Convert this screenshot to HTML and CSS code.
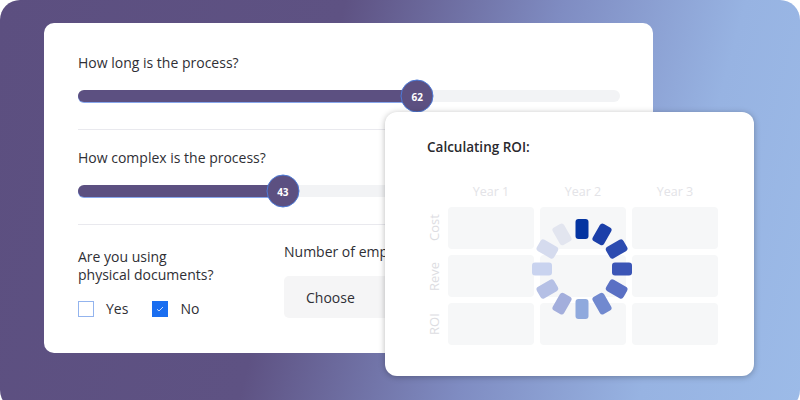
FILE: index.html
```html
<!DOCTYPE html>
<html>
<head>
    <meta charset='utf-8'>
    <title>ROI calculator</title>
    <meta name='viewport' content='width=device-width, initial-scale=1'>
    <link rel="stylesheet" href="styles.css">
</head>
<body>
    <div class="frame">
        <section class="card form-card">
            <div class="question">
                <p class="q-label">How long is the process?</p>
                <div class="slider">
                    <div class="slider-fill" style="width: 62.6%"></div>
                    <span class="slider-thumb" style="left: 62.6%">62</span>
                </div>
            </div>
            <div class="question">
                <p class="q-label">How complex is the process?</p>
                <div class="slider">
                    <div class="slider-fill" style="width: 37.8%"></div>
                    <span class="slider-thumb" style="left: 37.8%">43</span>
                </div>
            </div>
            <div class="bottom-row">
                <div class="field field-docs">
                    <p class="field-label">Are you using</p>
                    <p class="field-label">physical documents?</p>
                    <div class="choices">
                        <label class="choice"><span class="box"></span>Yes</label>
                        <label class="choice"><span class="box checked"><svg width="8" height="6" viewBox="0 0 8 6"><path d="M1 3.2 L3 5 L7 1" fill="none" stroke="#dbe6ff" stroke-width="0.9"/></svg></span>No</label>
                    </div>
                </div>
                <div class="field field-emp">
                    <p class="field-label">Number of employees</p>
                    <div class="select">Choose</div>
                </div>
            </div>
        </section>

        <section class="card roi-card">
            <p class="roi-title">Calculating ROI:</p>
            <div class="roi-grid">
                <span></span>
                <span class="year">Year 1</span>
                <span class="year">Year 2</span>
                <span class="year">Year 3</span>

                <span class="row-label">Cost</span>
                <span class="cell"></span><span class="cell"></span><span class="cell"></span>

                <span class="row-label">Reve</span>
                <span class="cell"></span><span class="cell"></span><span class="cell"></span>

                <span class="row-label">ROI</span>
                <span class="cell"></span><span class="cell"></span><span class="cell"></span>
            </div>
            <svg class="spinner" width="100" height="100" viewBox="-50 -50 100 100">
                <g transform="rotate(0)"><rect x="-6.5" y="-50" width="13" height="20" rx="3" fill="#0434a1"/></g>
                <g transform="rotate(30)"><rect x="-6.5" y="-50" width="13" height="20" rx="3" fill="#1b3fa9"/></g>
                <g transform="rotate(60)"><rect x="-6.5" y="-50" width="13" height="20" rx="3" fill="#2c4bb0"/></g>
                <g transform="rotate(90)"><rect x="-6.5" y="-50" width="13" height="20" rx="3" fill="#3b55b6"/></g>
                <g transform="rotate(120)"><rect x="-6.5" y="-50" width="13" height="20" rx="3" fill="#5a70c4"/></g>
                <g transform="rotate(150)"><rect x="-6.5" y="-50" width="13" height="20" rx="3" fill="#7189cf"/></g>
                <g transform="rotate(180)"><rect x="-6.5" y="-50" width="13" height="20" rx="3" fill="#8fa9dd"/></g>
                <g transform="rotate(210)"><rect x="-6.5" y="-50" width="13" height="20" rx="3" fill="#a3aedc"/></g>
                <g transform="rotate(240)"><rect x="-6.5" y="-50" width="13" height="20" rx="3" fill="#b5c0e5"/></g>
                <g transform="rotate(270)"><rect x="-6.5" y="-50" width="13" height="20" rx="3" fill="#c9d3ef"/></g>
                <g transform="rotate(300)"><rect x="-6.5" y="-50" width="13" height="20" rx="3" fill="#d5dbee"/></g>
                <g transform="rotate(330)"><rect x="-6.5" y="-50" width="13" height="20" rx="3" fill="#e2e5ef"/></g>
            </svg>
        </section>
    </div>
</body>
</html>
```

FILE: styles.css
```css
* {
    font-family: 'Open Sans', 'Liberation Sans', sans-serif;
    box-sizing: border-box;
}
body {
    margin: 0;
    height: 400px;
    overflow: hidden;
    background: #fff;
}
.frame {
    position: relative;
    width: 800px;
    height: 410px;
    padding: 23px 0 0 44px;
    border-radius: 20px;
    background: linear-gradient(105deg, #5c4f80 0%, #5e5283 38%, #7f8cc2 62%, #97b3e2 82%, #9cbbe8 100%);
}
.card {
    background: #fff;
}
.form-card {
    width: 609px;
    height: 330px;
    padding: 30px 33px 0 34px;
    border-radius: 10px;
    color: #2f2f35;
}
.question {
    padding-bottom: 27px;
    border-bottom: 1px solid #e9e9ee;
}
.question + .question {
    padding-top: 18px;
}
.q-label {
    margin: 0 0 17px;
    font-size: 14px;
    line-height: 20px;
}
.slider {
    position: relative;
    height: 12px;
    border-radius: 6px;
    background: #f2f3f5;
}
.slider-fill {
    height: 100%;
    border-radius: 6px 0 0 6px;
    background: #5c5081;
    box-shadow: 0 1px 0 rgba(86, 130, 230, 0.7);
}
.slider-thumb {
    position: absolute;
    top: 50%;
    width: 33px;
    height: 33px;
    transform: translate(-50%, -50%);
    display: flex;
    align-items: center;
    justify-content: center;
    border-radius: 50%;
    border: 1px solid #4c7ad8;
    background: #5c5081;
    color: #fff;
    font-size: 10px;
    font-weight: 700;
}
.bottom-row {
    display: grid;
    grid-template-columns: 206px 1fr;
}
.field-docs {
    margin-top: 23px;
}
.field-emp {
    margin-top: 18px;
}
.field-label {
    margin: 0;
    font-size: 14px;
    line-height: 18px;
}
.choices {
    display: flex;
    gap: 24px;
    margin-top: 17px;
}
.choice {
    display: flex;
    align-items: center;
    gap: 12px;
    font-size: 14px;
    line-height: 16px;
}
.box {
    width: 16px;
    height: 16px;
    display: flex;
    align-items: center;
    justify-content: center;
    border: 1px solid #93b4ee;
    background: #fff;
}
.box.checked {
    border-color: #1a6ef0;
    background: #1a6ef0;
}
.select {
    display: flex;
    align-items: center;
    width: 200px;
    height: 42px;
    margin-top: 15px;
    padding-left: 22px;
    border-radius: 5px;
    background: #f5f5f6;
    font-size: 14px;
}
.roi-card {
    position: absolute;
    left: 385px;
    top: 112px;
    width: 369px;
    height: 264px;
    padding: 26px 0 0 42px;
    border-radius: 12px;
    box-shadow: 0 1px 6px rgba(0, 0, 0, 0.28);
}
.roi-title {
    margin: 0;
    font-size: 13.5px;
    font-weight: 600;
    line-height: 18px;
    color: #29292e;
}
.roi-grid {
    display: grid;
    grid-template-columns: 15px repeat(3, 86px);
    grid-template-rows: 18px repeat(3, 42px);
    gap: 6px;
    margin-top: 27px;
}
.year {
    text-align: center;
    font-size: 12.5px;
    line-height: 18px;
    color: #e3e3e7;
}
.row-label {
    writing-mode: vertical-rl;
    transform: rotate(180deg);
    text-align: center;
    font-size: 13px;
    line-height: 15px;
    color: #dddde2;
}
.cell {
    border-radius: 4px;
    background: #f6f7f8;
}
.spinner {
    position: absolute;
    left: 147px;
    top: 107px;
}
```
